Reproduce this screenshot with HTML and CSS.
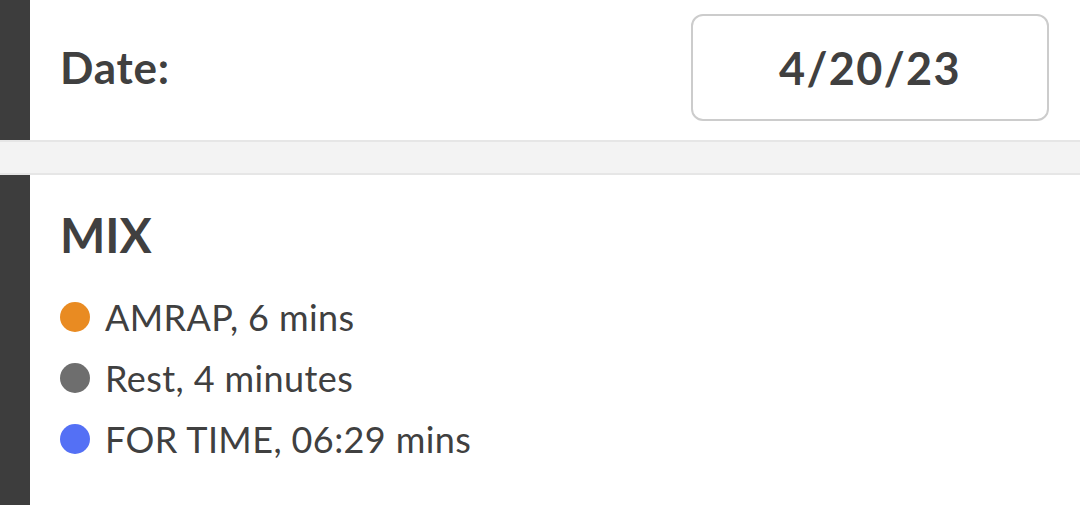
FILE: index.html
```html
<!DOCTYPE html>
<html>
<head>
<meta charset="utf-8">
<link rel="stylesheet" href="styles.css">
</head>
<body>
<section class="card date-card">
  <div class="date-label">Date:</div>
  <div class="date-box">4/20/23</div>
</section>
<div class="separator"></div>
<section class="card workout-card">
  <h1 class="workout-title">MIX</h1>
  <ul class="workout-list">
    <li class="workout-item"><span class="dot dot-orange"></span>AMRAP, 6 mins</li>
    <li class="workout-item"><span class="dot dot-gray"></span>Rest, 4 minutes</li>
    <li class="workout-item"><span class="dot dot-blue"></span>FOR TIME, 06:29 mins</li>
  </ul>
</section>
</body>
</html>
```
FILE: styles.css
```css
html, body {
  margin: 0;
  padding: 0;
  background: #ffffff;
  width: 1080px;
  height: 505px;
  overflow: hidden;
  font-family: "Lato", "Noto Sans", sans-serif;
  color: #404040;
}

.card {
  border-left: 30px solid #3d3d3d;
  box-sizing: border-box;
}

.date-card {
  height: 140px;
  display: flex;
  justify-content: space-between;
  align-items: flex-start;
  padding: 14px 31px 0 30px;
}

.date-label {
  font-size: 44px;
  font-weight: 700;
  line-height: 107px;
  letter-spacing: 0.8px;
}

.date-box {
  width: 358px;
  height: 107px;
  box-sizing: border-box;
  border: 2px solid #cccccc;
  border-radius: 12px;
  display: flex;
  align-items: center;
  justify-content: center;
  font-size: 45px;
  font-weight: 700;
  letter-spacing: 1.4px;
}

.separator {
  height: 35px;
  box-sizing: border-box;
  background: #f3f3f3;
  border-top: 2px solid #e6e6e6;
  border-bottom: 2px solid #e6e6e6;
}

.workout-card {
  height: 330px;
  padding: 30px 30px 0 30px;
}

.workout-title {
  margin: 0;
  font-size: 48px;
  font-weight: 700;
  line-height: 60px;
}

.workout-list {
  list-style: none;
  margin: 28px 0 0 0;
  padding: 0;
  display: flex;
  flex-direction: column;
  gap: 13px;
}

.workout-item {
  display: flex;
  align-items: center;
  gap: 15px;
  font-size: 36px;
  line-height: 48px;
  letter-spacing: 0.4px;
}

.dot {
  width: 30px;
  height: 30px;
  border-radius: 50%;
  flex: none;
}

.dot-orange { background: #e98b22; }
.dot-gray { background: #6e6e6e; }
.dot-blue { background: #5470f5; }
```
